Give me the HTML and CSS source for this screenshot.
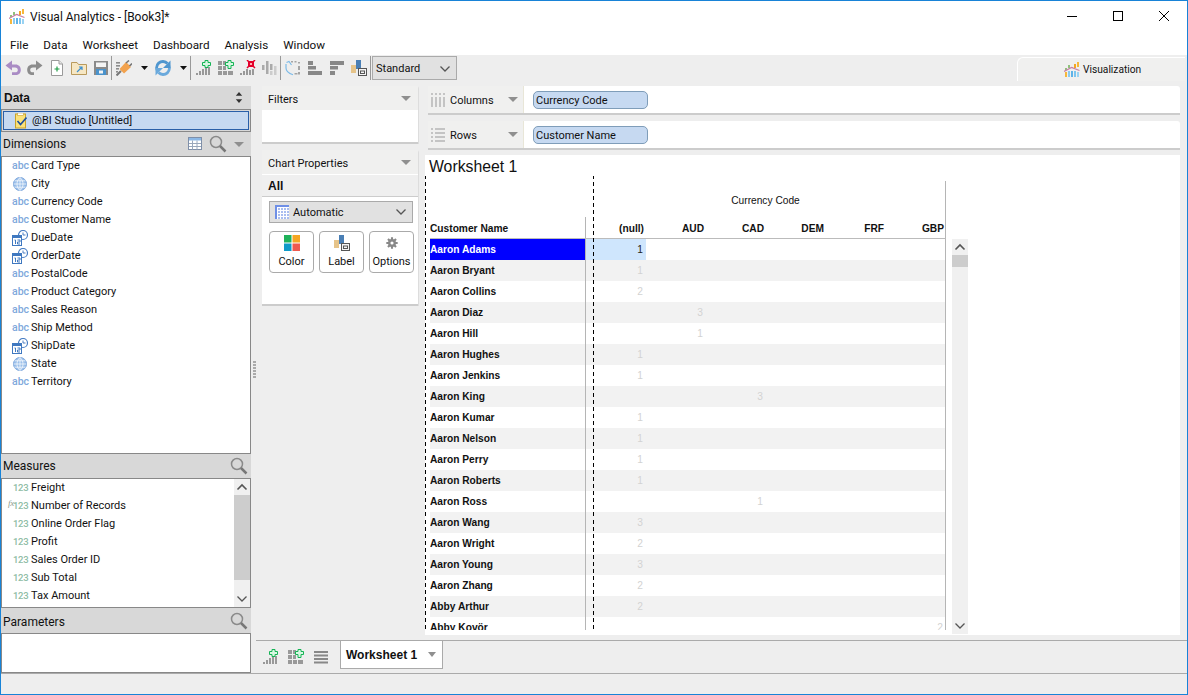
FILE: index.html
```html
<!DOCTYPE html>
<html lang="en">
<head>
<meta charset="utf-8">
<title>Visual Analytics</title>
<link rel="stylesheet" href="styles.css">
</head>
<body>
<svg class="defs" width="0" height="0" aria-hidden="true">
  <defs>
    <symbol id="i-logo" viewBox="0 0 16 16">
      <rect x="1" y="10" width="2" height="5" fill="#f6b73c"/><rect x="4" y="9" width="2" height="6" fill="#8ccbf0"/><rect x="7" y="9" width="2" height="6" fill="#5fb3e8"/><rect x="10" y="9" width="2" height="6" fill="#7cc5ee"/><rect x="13" y="10" width="2" height="5" fill="#9ad3f3"/>
      <rect x="4" y="3" width="2" height="3" fill="#8fc27c"/><rect x="7" y="5" width="2" height="1" fill="#e3a0b8"/><rect x="10" y="2" width="2" height="4" fill="#f5a623"/><rect x="13" y="0" width="2" height="5" fill="#f6b73c"/><rect x="1" y="6" width="2" height="2" fill="#8fc27c"/>
      <path d="M0 9.5 L7.5 5.5 L15.5 8.5" fill="none" stroke="#c77fa6" stroke-width="1.3"/>
    </symbol>
    <symbol id="i-undo" viewBox="0 0 16 16"><path d="M7 0.5 L0.5 5.5 L7 10.5 V7.5 H10 C12 7.5 12.800 8.500 12.800 10 C12.800 11.500 12 12.300 10 12.300 H7 V15 H10.500 C13.800 15 15.800 13 15.800 10 C15.800 6.800 13.800 4.500 10.500 4.500 H7 Z" fill="#a98bc4"/></symbol>
    <symbol id="i-redo" viewBox="0 0 16 16"><path d="M9 0.500 L15.500 5.500 L9 10.500 V7.500 H6 C4 7.500 3.200 8.500 3.200 10 C3.200 11.500 4 12.300 6 12.300 H7 V15 H5.500 C2.200 15 .2 13 .2 10 C.2 6.800 2.200 4.500 5.500 4.500 H9 Z" fill="#8c8c8c"/></symbol>
    <symbol id="i-new" viewBox="0 0 16 16"><path d="M2.500 .5 H10 L13.500 4 V15.500 H2.500 Z" fill="#fff" stroke="#9a9a9a"/><path d="M10 .5 V4 H13.500" fill="#e8e8e8" stroke="#9a9a9a"/><path d="M5.500 9 H10.500 M8 6.500 V11.500" stroke="#1f9d45" stroke-width="1.200"/></symbol>
    <symbol id="i-folder" viewBox="0 0 16 16"><path d="M.5 2.500 H6 L7.500 4.500 H15.500 V14.500 H.5 Z" fill="#f6e7c4" stroke="#b99a5c"/><path d="M6 12 L11 7 M8 7 H11 V10" fill="none" stroke="#3a8fd0" stroke-width="1.200"/></symbol>
    <symbol id="i-save" viewBox="0 0 16 16"><rect x="1" y="1" width="14" height="14" fill="#8a8a8a"/><rect x="3" y="2.500" width="10" height="4.500" fill="#f4f4f4"/><rect x="3" y="9" width="10" height="6" fill="#4a93cc"/><rect x="6" y="10.500" width="4" height="3" fill="#f4f4f4"/></symbol>
    <symbol id="i-plug" viewBox="0 0 16 16"><path d="M.5 15.500 L5 11" stroke="#777" stroke-width="2"/><g fill="#8c8c8c"><rect x="0" y="2" width="4" height="1.600"/><rect x="0" y="5" width="4" height="1.600"/><rect x="0" y="8" width="3" height="1.600"/><rect x="0" y="11" width="2" height="1.600"/></g><path d="M3.500 9 L10 2 L15 7 L8 13.500 Z" fill="#f2a24e"/><path d="M10 3 L13 0.500 M13.500 6 L16 3.500" stroke="#777" stroke-width="1.600"/></symbol>
    <symbol id="i-refresh" viewBox="0 0 16 16"><path d="M12.500 3.500 A6.300 6.300 0 0 0 3.200 12" fill="none" stroke="#4f96cf" stroke-width="2.800"/><path d="M3.500 12.500 A6.300 6.300 0 0 0 12.800 4" fill="none" stroke="#6aa9dc" stroke-width="2.800"/><path d="M15.500 .5 V8 H8 Z" fill="#4f96cf"/><path d="M.5 15.500 V8 H8 Z" fill="#6aa9dc"/></symbol>
    <symbol id="i-addchart" viewBox="0 0 16 16"><g fill="#999"><rect x="0" y="13" width="2" height="2"/><rect x="3" y="11" width="2" height="4"/><rect x="6" y="9" width="2" height="6"/><rect x="9" y="8" width="2" height="7"/><rect x="12" y="7" width="2" height="8"/></g><path d="M9 .5 H12 V2.500 H14.500 V5.500 H12 V7.500 H9 V5.500 H6.500 V2.500 H9 Z" fill="#d8f7e2" stroke="#14b455"/></symbol>
    <symbol id="i-addtable" viewBox="0 0 16 16"><g fill="#999"><rect x="0" y="1" width="4" height="4"/><rect x="5" y="1" width="3" height="4"/><rect x="0" y="6" width="4" height="4"/><rect x="5" y="6" width="3" height="4"/><rect x="0" y="11" width="4" height="4"/><rect x="5" y="11" width="4" height="4"/><rect x="10" y="11" width="5" height="4"/></g><path d="M10 .5 H13 V2.500 H15.500 V5.500 H13 V8.500 H10 V5.500 H7.500 V2.500 H10 Z" fill="#d8f7e2" stroke="#14b455"/></symbol>
    <symbol id="i-delchart" viewBox="0 0 16 16"><g fill="#999"><rect x="0" y="13" width="2" height="2"/><rect x="3" y="11" width="2" height="4"/><rect x="6" y="9" width="2" height="6"/><rect x="9" y="10" width="2" height="5"/><rect x="12" y="9" width="2" height="6"/></g><rect x="8" y="1" width="6" height="6" fill="#e4002b"/><path d="M7 0 L9 2 M15 0 L13 2 M7 8 L9 6 M15 8 L13 6" stroke="#e4002b" stroke-width="1.500"/><rect x="10" y="3" width="2" height="2" fill="#ffb0b0"/></symbol>
    <symbol id="i-grchart" viewBox="0 0 16 16"><g fill="#aaa"><rect x="0" y="5" width="2.500" height="5"/><rect x="4" y="1" width="2.500" height="13"/><rect x="8" y="4" width="2.500" height="6"/></g><g fill="#ccc"><rect x="8" y="11" width="2.500" height="4"/><rect x="12" y="6" width="2.500" height="9"/></g></symbol>
    <symbol id="i-lasso" viewBox="0 0 16 16"><path d="M1 4 V8 C1 11 4 13.500 8 14.800 M1.500 2.500 L4 1.500 L6.500 5" fill="none" stroke="#7dbbe8" stroke-width="1.200"/><g fill="#a5a5a5"><rect x="6" y="1" width="2" height="1.500"/><rect x="9.500" y="1" width="2" height="1.500"/><rect x="13" y="2" width="2" height="1.500"/><rect x="13" y="6" width="2" height="4"/><rect x="13" y="12" width="2" height="2.500"/><rect x="9.500" y="13" width="3" height="1.500"/></g></symbol>
    <symbol id="i-bars1" viewBox="0 0 16 16"><g fill="#888"><rect x="1" y="1" width="5" height="4"/><rect x="1" y="6" width="8" height="3.500"/><rect x="1" y="11" width="14" height="4"/></g></symbol>
    <symbol id="i-bars2" viewBox="0 0 16 16"><g fill="#888"><rect x="1" y="1" width="14" height="4"/><rect x="1" y="6" width="8" height="3.500"/><rect x="1" y="11" width="5" height="4"/></g></symbol>
    <symbol id="i-label" viewBox="0 0 16 16"><rect x="0" y="5" width="5" height="8" fill="#e6c48a"/><rect x="5" y="0" width="5" height="9" fill="#4a7fb5"/><rect x="7.500" y="8.500" width="8" height="7" fill="#f4f4f4" stroke="#555"/><rect x="9.500" y="11" width="4" height="2.500" fill="none" stroke="#555"/></symbol>
    <symbol id="i-globe" viewBox="0 0 16 16"><circle cx="8" cy="8" r="6.500" fill="#9cc0ea" stroke="#7aa5dc"/><path d="M1.500 8 H14.500 M2.500 4.800 H13.500 M2.500 11.200 H13.500 M8 1.500 V14.500 M8 1.500 C4 5 4 11 8 14.500 M8 1.500 C12 5 12 11 8 14.500" fill="none" stroke="#fff" stroke-width=".7"/></symbol>
    <symbol id="i-date" viewBox="0 0 16 16"><circle cx="11" cy="5" r="4.500" fill="#fff" stroke="#4a7fc4" stroke-width="1.200"/><path d="M11 2.500 V5 H13.500" fill="none" stroke="#4a7fc4"/><rect x="0.500" y="5.500" width="9" height="10" fill="#fff" stroke="#3f78c0"/><rect x="0.500" y="5.500" width="9" height="2.500" fill="#3f78c0"/><path d="M2.500 10 H3.500 V14 M5.500 10 H8 V12 H5.500 V14 H8" fill="none" stroke="#3f78c0"/></symbol>
    <symbol id="i-search" viewBox="0 0 18 18"><circle cx="7" cy="7" r="5.500" fill="none" stroke="#8a8a8a" stroke-width="1.500"/><path d="M11 11 L16.500 16.500" stroke="#777" stroke-width="2.500"/></symbol>
    <symbol id="i-table" viewBox="0 0 14 14"><rect x=".5" y=".5" width="13" height="12" fill="#fff" stroke="#7f8fa8"/><rect x="1" y="1" width="12" height="2.500" fill="#8cb8e6"/><path d="M1 6.500 H13 M1 9.500 H13 M4.500 3.500 V12.500 M9 3.500 V12.500" stroke="#9aa8bc"/></symbol>
    <symbol id="i-color" viewBox="0 0 16 16"><rect x="0" y="0" width="7.500" height="7.500" fill="#1fb25a"/><rect x="8.500" y="0" width="7.500" height="7.500" fill="#f5a623"/><rect x="0" y="8.500" width="7.500" height="7.500" fill="#0f9ac8"/><rect x="8.500" y="8.500" width="7.500" height="7.500" fill="#ee5a4f"/></symbol>
    <symbol id="i-gear" viewBox="0 0 16 16"><g stroke="#888" stroke-width="2.400"><path d="M8 1.500 V14.500 M1.500 8 H14.500 M3.400 3.400 L12.600 12.600 M12.600 3.400 L3.400 12.600"/></g><circle cx="8" cy="8" r="4.500" fill="#888"/><circle cx="8" cy="8" r="1.800" fill="#fff"/></symbol>
    <symbol id="i-auto" viewBox="0 0 14 14"><rect width="14" height="14" fill="#fff"/><g fill="#6f8fe6"><rect x="0" y="0" width="14" height="2"/><rect x="0" y="0" width="2" height="14"/></g><g fill="#a9bdf0"><rect x="3" y="3" width="2" height="2"/><rect x="6" y="3" width="2" height="2"/><rect x="9" y="3" width="2" height="2"/><rect x="12" y="3" width="2" height="2"/><rect x="3" y="6" width="2" height="2"/><rect x="6" y="6" width="2" height="2"/><rect x="9" y="6" width="2" height="2"/><rect x="12" y="6" width="2" height="2"/><rect x="3" y="9" width="2" height="2"/><rect x="6" y="9" width="2" height="2"/><rect x="9" y="9" width="2" height="2"/><rect x="12" y="9" width="2" height="2"/><rect x="3" y="12" width="2" height="2"/><rect x="6" y="12" width="2" height="2"/><rect x="9" y="12" width="2" height="2"/><rect x="12" y="12" width="2" height="2"/></g></symbol>
    <symbol id="i-grip-c" viewBox="0 0 14 14"><g fill="#c4c4c4"><rect x="0" y="0" width="2" height="2"/><rect x="4" y="0" width="2" height="2"/><rect x="8" y="0" width="2" height="2"/><rect x="12" y="0" width="2" height="2"/><rect x="0" y="4" width="2" height="10"/><rect x="4" y="4" width="2" height="10"/><rect x="8" y="4" width="2" height="10"/><rect x="12" y="4" width="2" height="10"/></g></symbol>
    <symbol id="i-grip-r" viewBox="0 0 14 14"><g fill="#c4c4c4"><rect x="0" y="0" width="2" height="2"/><rect x="0" y="4" width="2" height="2"/><rect x="0" y="8" width="2" height="2"/><rect x="0" y="12" width="2" height="2"/><rect x="4" y="0" width="10" height="2"/><rect x="4" y="4" width="10" height="2"/><rect x="4" y="8" width="10" height="2"/><rect x="4" y="12" width="10" height="2"/></g></symbol>
    <symbol id="i-lines" viewBox="0 0 16 16"><g fill="#888"><rect x="1" y="2" width="14" height="2"/><rect x="1" y="5.500" width="14" height="2"/><rect x="1" y="9" width="14" height="2"/><rect x="1" y="12.500" width="14" height="2"/></g></symbol>
    <symbol id="i-chev" viewBox="0 0 12 8"><path d="M1.500 6.500 L6 2 L10.500 6.500" fill="none" stroke="#555" stroke-width="1.600"/></symbol>
    <symbol id="i-chevd" viewBox="0 0 12 8"><path d="M1.500 1.500 L6 6 L10.500 1.500" fill="none" stroke="#555" stroke-width="1.300"/></symbol>
    <symbol id="i-updown" viewBox="0 0 8 12"><path d="M4 0 L7.500 4 H.5 Z M4 12 L7.500 8 H.5 Z" fill="#333"/></symbol>
  </defs>
</svg>

<div class="window">
  <header class="titlebar">
    <svg class="ic16 logo"><use href="#i-logo"/></svg>
    <span class="title">Visual Analytics - [Book3]*</span>
    <div class="winbtns">
      <svg class="winbtn" viewBox="0 0 12 12"><path d="M1 6.500 H11" stroke="#000"/></svg>
      <svg class="winbtn" viewBox="0 0 12 12"><rect x="1.500" y="1.500" width="9" height="9" fill="none" stroke="#000"/></svg>
      <svg class="winbtn" viewBox="0 0 12 12"><path d="M1 1 L11 11 M11 1 L1 11" stroke="#000"/></svg>
    </div>
  </header>
  <nav class="menubar"><span>File</span><span>Data</span><span>Worksheet</span><span>Dashboard</span><span>Analysis</span><span>Window</span></nav>
  <div class="toolbar">
    <svg class="ic16 tb"><use href="#i-undo"/></svg>
    <svg class="ic16 tb"><use href="#i-redo"/></svg>
    <svg class="ic16 tb"><use href="#i-new"/></svg>
    <svg class="ic16 tb"><use href="#i-folder"/></svg>
    <svg class="ic16"><use href="#i-save"/></svg>
    <i class="sep"></i>
    <svg class="ic16"><use href="#i-plug"/></svg>
    <i class="drop"></i>
    <svg class="ic16"><use href="#i-refresh"/></svg>
    <i class="drop drop-last"></i>
    <i class="sep sep-b"></i>
    <svg class="ic16 tb"><use href="#i-addchart"/></svg>
    <svg class="ic16 tb"><use href="#i-addtable"/></svg>
    <svg class="ic16 tb"><use href="#i-delchart"/></svg>
    <svg class="ic16"><use href="#i-grchart"/></svg>
    <i class="sep sep-c"></i>
    <svg class="ic16 tb"><use href="#i-lasso"/></svg>
    <svg class="ic16 tb"><use href="#i-bars1"/></svg>
    <svg class="ic16 tb"><use href="#i-bars2"/></svg>
    <svg class="ic16"><use href="#i-label"/></svg>
    <i class="sep sep-d"></i>
    <div class="tb-select"><span>Standard</span><svg class="chev"><use href="#i-chevd"/></svg></div>
    <div class="vistab"><svg class="ic16"><use href="#i-logo"/></svg><span>Visualization</span></div>
  </div>

  <div class="body">
    <aside class="left">
      <div class="phead phead-data"><b>Data</b><svg class="updown"><use href="#i-updown"/></svg></div>
      <div class="source"><div class="source-in">
        <svg class="srcicon" viewBox="0 0 12 16"><rect x=".5" y="1" width="10" height="14" fill="#fbe27a" stroke="#c9a227"/><rect x="2.500" y="0" width="6" height="2.500" fill="#fff" stroke="#c9a227" stroke-width=".6"/><path d="M2.500 8 L5.500 11.500 L11.500 4.500" fill="none" stroke="#1d4f9c" stroke-width="1.600"/></svg>
        <span>@BI Studio [Untitled]</span>
      </div></div>
      <div class="phead phead-dim"><span>Dimensions</span><span class="phead-tools"><svg class="ic14"><use href="#i-table"/></svg><svg class="ic18"><use href="#i-search"/></svg><i class="tri"></i></span></div>
      <ul class="fields fields-dim">
        <li><span class="abc">abc</span>Card Type</li>
        <li><svg class="ficon"><use href="#i-globe"/></svg>City</li>
        <li><span class="abc">abc</span>Currency Code</li>
        <li><span class="abc">abc</span>Customer Name</li>
        <li><svg class="ficon"><use href="#i-date"/></svg>DueDate</li>
        <li><svg class="ficon"><use href="#i-date"/></svg>OrderDate</li>
        <li><span class="abc">abc</span>PostalCode</li>
        <li><span class="abc">abc</span>Product Category</li>
        <li><span class="abc">abc</span>Sales Reason</li>
        <li><span class="abc">abc</span>Ship Method</li>
        <li><svg class="ficon"><use href="#i-date"/></svg>ShipDate</li>
        <li><svg class="ficon"><use href="#i-globe"/></svg>State</li>
        <li><span class="abc">abc</span>Territory</li>
      </ul>
      <div class="phead phead-m"><span>Measures</span><svg class="ic18"><use href="#i-search"/></svg></div>
      <div class="measures">
        <ul class="fields">
          <li><span class="num">123</span>Freight</li>
          <li><span class="num"><em class="fx">fx</em>123</span>Number of Records</li>
          <li><span class="num">123</span>Online Order Flag</li>
          <li><span class="num">123</span>Profit</li>
          <li><span class="num">123</span>Sales Order ID</li>
          <li><span class="num">123</span>Sub Total</li>
          <li><span class="num">123</span>Tax Amount</li>
        </ul>
        <div class="vscroll vscroll-m"><svg class="sarrow"><use href="#i-chev"/></svg><div class="vtrack"><div class="vthumb vthumb-m"></div></div><svg class="sarrow"><use href="#i-chevd"/></svg></div>
      </div>
      <div class="phead phead-p"><span>Parameters</span><svg class="ic18"><use href="#i-search"/></svg></div>
      <div class="params"></div>
    </aside>

    <div class="center">
      <div class="workarea">
        <div class="splitter"><i></i><i></i><i></i><i></i><i></i><i></i></div>
        <div class="mid">
          <section class="card card-filters">
            <div class="card-head"><span>Filters</span><i class="tri"></i></div>
          </section>
          <section class="card card-props">
            <div class="card-head"><span>Chart Properties</span><i class="tri"></i></div>
            <div class="all">All</div>
            <div class="auto-select"><svg class="ic14"><use href="#i-auto"/></svg><span>Automatic</span><svg class="chev"><use href="#i-chevd"/></svg></div>
            <div class="prop-btns">
              <div class="prop-btn"><svg class="ic16"><use href="#i-color"/></svg><span>Color</span></div>
              <div class="prop-btn"><svg class="ic16"><use href="#i-label"/></svg><span>Label</span></div>
              <div class="prop-btn"><svg class="ic16 gear"><use href="#i-gear"/></svg><span>Options</span></div>
            </div>
          </section>
        </div>
        <div class="main">
          <div class="shelf">
            <div class="shelf-head"><svg class="ic14"><use href="#i-grip-c"/></svg><span>Columns</span><i class="tri"></i></div>
            <div class="pill">Currency Code</div>
          </div>
          <div class="shelf shelf-last">
            <div class="shelf-head"><svg class="ic14"><use href="#i-grip-r"/></svg><span>Rows</span><i class="tri"></i></div>
            <div class="pill">Customer Name</div>
          </div>
          <div class="sheet">
            <i class="dash dash-a"></i><i class="dash dash-b"></i>
            <h1 class="sheet-title">Worksheet 1</h1>
            <div class="sheet-body">
              <div class="crosstab">
                <div class="axis-title">Currency Code</div>
                <div class="xrow xhead"><div class="xname">Customer Name</div><div>(null)</div><div>AUD</div><div>CAD</div><div>DEM</div><div>FRF</div><div>GBP</div></div>
                <div class="xrow"><div class="xname xsel">Aaron Adams</div><div class="xsel-val">1</div><div></div><div></div><div></div><div></div><div></div></div>
                <div class="xrow"><div class="xname">Aaron Bryant</div><div>1</div><div></div><div></div><div></div><div></div><div></div></div>
                <div class="xrow"><div class="xname">Aaron Collins</div><div>2</div><div></div><div></div><div></div><div></div><div></div></div>
                <div class="xrow"><div class="xname">Aaron Diaz</div><div></div><div>3</div><div></div><div></div><div></div><div></div></div>
                <div class="xrow"><div class="xname">Aaron Hill</div><div></div><div>1</div><div></div><div></div><div></div><div></div></div>
                <div class="xrow"><div class="xname">Aaron Hughes</div><div>1</div><div></div><div></div><div></div><div></div><div></div></div>
                <div class="xrow"><div class="xname">Aaron Jenkins</div><div>1</div><div></div><div></div><div></div><div></div><div></div></div>
                <div class="xrow"><div class="xname">Aaron King</div><div></div><div></div><div>3</div><div></div><div></div><div></div></div>
                <div class="xrow"><div class="xname">Aaron Kumar</div><div>1</div><div></div><div></div><div></div><div></div><div></div></div>
                <div class="xrow"><div class="xname">Aaron Nelson</div><div>1</div><div></div><div></div><div></div><div></div><div></div></div>
                <div class="xrow"><div class="xname">Aaron Perry</div><div>1</div><div></div><div></div><div></div><div></div><div></div></div>
                <div class="xrow"><div class="xname">Aaron Roberts</div><div>1</div><div></div><div></div><div></div><div></div><div></div></div>
                <div class="xrow"><div class="xname">Aaron Ross</div><div></div><div></div><div>1</div><div></div><div></div><div></div></div>
                <div class="xrow"><div class="xname">Aaron Wang</div><div>3</div><div></div><div></div><div></div><div></div><div></div></div>
                <div class="xrow"><div class="xname">Aaron Wright</div><div>2</div><div></div><div></div><div></div><div></div><div></div></div>
                <div class="xrow"><div class="xname">Aaron Young</div><div>3</div><div></div><div></div><div></div><div></div><div></div></div>
                <div class="xrow"><div class="xname">Aaron Zhang</div><div>2</div><div></div><div></div><div></div><div></div><div></div></div>
                <div class="xrow"><div class="xname">Abby Arthur</div><div>2</div><div></div><div></div><div></div><div></div><div></div></div>
                <div class="xrow"><div class="xname">Abby Kovör</div><div></div><div></div><div></div><div></div><div></div><div>2</div></div>
              </div>
              <div class="vscroll vscroll-x"><svg class="sarrow"><use href="#i-chev"/></svg><div class="vtrack"><div class="vthumb vthumb-x"></div></div><svg class="sarrow"><use href="#i-chevd"/></svg></div>
            </div>
          </div>
        </div>
      </div>
      <div class="tabbar">
        <svg class="ic16"><use href="#i-addchart"/></svg>
        <svg class="ic16"><use href="#i-addtable"/></svg>
        <svg class="ic16"><use href="#i-lines"/></svg>
        <div class="tab"><span>Worksheet 1</span><i class="tri"></i></div>
      </div>
    </div>
  </div>
  <footer class="status"></footer>
</div>
</body>
</html>
```
FILE: styles.css
```css
* { box-sizing: border-box; }
html, body { margin: 0; padding: 0; }
body { width: 1188px; height: 695px; overflow: hidden; font: 11px/18px Roboto, "Liberation Sans", sans-serif; color: #111; background: #eee; }
.defs { position: absolute; }
ul { list-style: none; margin: 0; padding: 0; }
svg { display: block; flex: none; }
.ic16 { width: 16px; height: 16px; }
.ic14 { width: 14px; height: 14px; }
.ic18 { width: 18px; height: 18px; }

.window { width: 1188px; height: 695px; display: flex; flex-direction: column; border: 1px solid #1883d7; background: #eee; }

.titlebar { height: 35px; flex: none; background: #fff; display: flex; align-items: center; padding-left: 8px; }
.logo { margin-right: 5px; margin-top: -4px; }
.title { font-size: 12px; margin-top: -4px; }
.winbtns { margin-left: auto; display: flex; gap: 34px; padding-right: 17px; margin-top: -5px; }
.winbtn { width: 12px; height: 12px; }

.menubar { height: 19px; flex: none; background: #fff; display: flex; gap: 15px; padding: 0 0 2px 9px; font-size: 11.7px; align-items: center; }

.toolbar { height: 30px; flex: none; background: #eee; display: flex; align-items: center; padding-left: 4px; position: relative; padding-bottom: 4px; }
.tb { margin-right: 6px; }
.sep { width: 1px; height: 24px; background: #999; margin: 0 4px 0 2px; flex: none; }
.sep-b { margin: 0 5px 0 0; }
.sep-c { margin: 0 4px 0 2px; }
.sep-d { margin: 0 1px 0 3px; }
.drop { width: 7px; height: 4px; clip-path: polygon(0 0, 100% 0, 50% 100%); background: #111; margin: 0 7px 0 9px; flex: none; }
.drop-last { margin-right: 3px; }
.tb-select { width: 85px; height: 24px; background: #e1e1e1; border: 1px solid #aaa; display: flex; align-items: center; justify-content: space-between; padding: 2px 5px 0 3px; }
.chev { width: 12px; height: 8px; }
.vistab { position: absolute; left: 1016px; top: 2px; width: 168px; height: 24px; background: #f0f0ef; border-top: 1px solid #fff; border-left: 1px solid #fff; border-top-left-radius: 6px; display: flex; align-items: center; padding: 1px 0 0 46px; gap: 3px; font-size: 10.2px; }

.body { flex: 1; display: flex; min-height: 0; }

.left { width: 250px; flex: none; display: flex; flex-direction: column; padding-top: 1px; }
.phead { flex: none; background: #d8d8d8; display: flex; align-items: center; justify-content: space-between; padding: 0 2px; font-size: 12px; }
.phead-data { height: 23px; padding: 0 8px 0 3px; }
.phead-data b { font-family: "Liberation Sans", sans-serif; }
.updown { width: 8px; height: 11px; }
.source { height: 23px; flex: none; border: 1px solid #888; padding: 1px; background: #d8d8d8; }
.source-in { height: 100%; background: #c6d9f1; border: 1px solid #2a5fa8; display: flex; align-items: center; padding-left: 11px; gap: 5px; }
.srcicon { width: 12px; height: 16px; }
.phead-dim { height: 24px; }
.phead-tools { display: flex; align-items: center; gap: 7px; padding-right: 5px; }
.tri { display: block; width: 0; height: 0; border: 5px solid transparent; border-top: 5px solid #8f8f8f; border-bottom: 0; flex: none; }
.fields { background: #fff; }
.fields li { height: 18px; display: flex; align-items: center; padding-left: 11px; white-space: nowrap; position: relative; }
.fields-dim { height: 298px; border: 1px solid #888; flex: none; }
.fields-dim li { padding-left: 10px; }
.abc { width: 19px; font-size: 10.5px; font-weight: 500; color: #7ea8dc; flex: none; }
.ficon { width: 16px; height: 16px; margin-right: 3px; }
.num { width: 18px; font-size: 9.5px; letter-spacing: -.3px; font-weight: 500; color: #8fbda6; flex: none; }
.fx { position: absolute; left: 6px; top: -3px; font-family: "Liberation Serif", serif; font-size: 9px; color: #8a9a90; }
.phead-m { height: 24px; padding-right: 3px; }
.phead-p { height: 25px; padding: 2px 3px 0 2px; }
.phead-p svg { margin-top: -2px; }
.measures { height: 130px; flex: none; border: 1px solid #888; background: #fff; display: flex; }
.measures .fields { flex: 1; }
.vscroll { width: 16px; flex: none; background: #f0f0f0; display: flex; flex-direction: column; align-items: stretch; }
.sarrow { width: 12px; height: 8px; margin: 4px 2px; flex: none; }
.vtrack { flex: 1; min-height: 0; }
.vthumb { background: #cdcdcd; }
.vthumb-m { height: 85px; }
.vthumb-x { height: 12px; }
.params { flex: 1; background: #fff; border: 1px solid #888; }

.center { flex: 1; min-width: 0; display: flex; flex-direction: column; }
.workarea { flex: 1; min-height: 0; display: flex; }
.splitter { width: 11px; flex: none; display: flex; flex-direction: column; align-items: flex-start; justify-content: center; gap: 1px; padding: 13px 0 0 2px; }
.splitter i { width: 3px; height: 2px; background: #aaa; }
.mid { width: 156px; flex: none; display: flex; flex-direction: column; gap: 6px; padding-top: 1px; }
.card { background: #fff; border-radius: 3px 3px 0 0; border-bottom: 2px solid #ccc; box-shadow: 1px 0 0 #ddd; }
.card-filters { height: 58px; }
.card-props { height: 156px; }
.card-head { height: 24px; background: #f0f0ef; display: flex; align-items: center; justify-content: space-between; padding: 0 7px 0 6px; }
.card-head span { padding-top: 3px; }
.all { height: 22px; margin-top: 1px; background: #efefef; border-bottom: 1px solid #ccc; font-size: 12px; font-weight: 700; font-family: "Liberation Sans", sans-serif; display: flex; align-items: center; padding-left: 6px; }
.auto-select { margin: 4px 5px 0 7px; height: 22px; background: #e1e1e1; border: 1px solid #aaa; display: flex; align-items: center; padding: 0 5px; gap: 4px; }
.auto-select span { padding-top: 2px; }
.auto-select .chev { margin-left: auto; }
.prop-btns { display: flex; gap: 5px; padding: 8px 4px 0 7px; }
.prop-btn { width: 45px; height: 42px; border: 1px solid #aaa; border-radius: 4px; display: flex; flex-direction: column; align-items: center; padding-top: 3px; gap: 2px; }
.gear { width: 14px; height: 14px; margin: 1px 0; }

.main { width: 755px; flex: none; margin-left: 7px; display: flex; flex-direction: column; padding-top: 1px; }
.shelf { height: 29px; margin-left: 3px; margin-bottom: 6px; background: #fff; border-bottom: 2px solid #ccc; border-radius: 3px 3px 0 0; display: flex; align-items: center; flex: none; }
.shelf-last { margin-bottom: 5px; }
.shelf-head { width: 96px; height: 100%; background: #f0f0ef; border-right: 1px solid #e8e6d8; display: flex; align-items: center; padding: 0 5px 0 3px; gap: 5px; flex: none; }
.shelf-head span { padding-top: 2px; }
.shelf-head .tri { margin-left: auto; }
.pill { width: 115px; height: 18px; margin-left: 9px; background: #c6d9f1; border: 1px solid #7f9db9; border-radius: 5px; padding: 2px 0 0 2px; display: flex; align-items: center; }

.sheet { flex: 1; min-height: 0; background: #fff; position: relative; margin-bottom: 5px; overflow: hidden; }
.sheet-title { margin: 0; height: 26px; padding-left: 4px; font: 400 15.8px/23px "Liberation Sans", sans-serif; }
.sheet-body { display: flex; padding-left: 5px; gap: 6px; }
.crosstab { width: 516px; height: 449px; overflow: hidden; font: 700 10.2px/21px "Liberation Sans", sans-serif; flex: none; }
.axis-title { height: 36px; font-weight: 400; font-size: 10.2px; text-align: center; padding-left: 156px; padding-top: 9px; border-right: 1px solid #b5b5b5; }
.xrow { height: 21px; display: grid; grid-template-columns: 156px repeat(6, 60px); grid-template-rows: 21px; line-height: 22px; width: 516px; border-right: 1px solid #b5b5b5; color: #d2d2d2; font-weight: 400; }
.xrow > div { text-align: right; padding-right: 3px; }
.xrow:nth-child(even) { background: #f2f2f2; }
.xrow .xname { text-align: left; padding-left: 0; color: #111; font-weight: 700; border-right: 1px solid #b5b5b5; }
.xrow.xhead { height: 22px; background: #fff; color: #111; font-weight: 700; border-bottom: 1px solid #bbb; line-height: 23px; }
.xhead > div { padding-right: 2px; }
.xrow .xsel { background: #0000ff; color: #fff; }
.xrow .xsel-val { background: #cfe6fd; color: #222; }
.vscroll-x { margin-top: 58px; height: 395px; width: 16px; }
.dash { position: absolute; top: 21px; bottom: 5px; width: 0; border-left: 1px solid #000; border-image: repeating-linear-gradient(#000 0 4px, transparent 4px 7px) 1; z-index: 1; }
.dash-a { left: 0; }
.dash-b { left: 168px; }

.tabbar { height: 33px; flex: none; margin-left: 5px; border-top: 1px solid #aaa; display: flex; align-items: center; padding-left: 7px; gap: 9px; }
.tab { margin-left: 2px; width: 103px; height: 28px; align-self: flex-start; background: #fff; border: 1px solid #aaa; border-top: 0; display: flex; align-items: center; padding: 0 6px 0 5px; justify-content: space-between; font-size: 12px; font-weight: 700; font-family: "Liberation Sans", sans-serif; }
.tab .tri { border-width: 4px; border-top-width: 5px; border-bottom: 0; }
.status { height: 21px; flex: none; border-top: 1px solid #aaa; background: #eee; }
```
